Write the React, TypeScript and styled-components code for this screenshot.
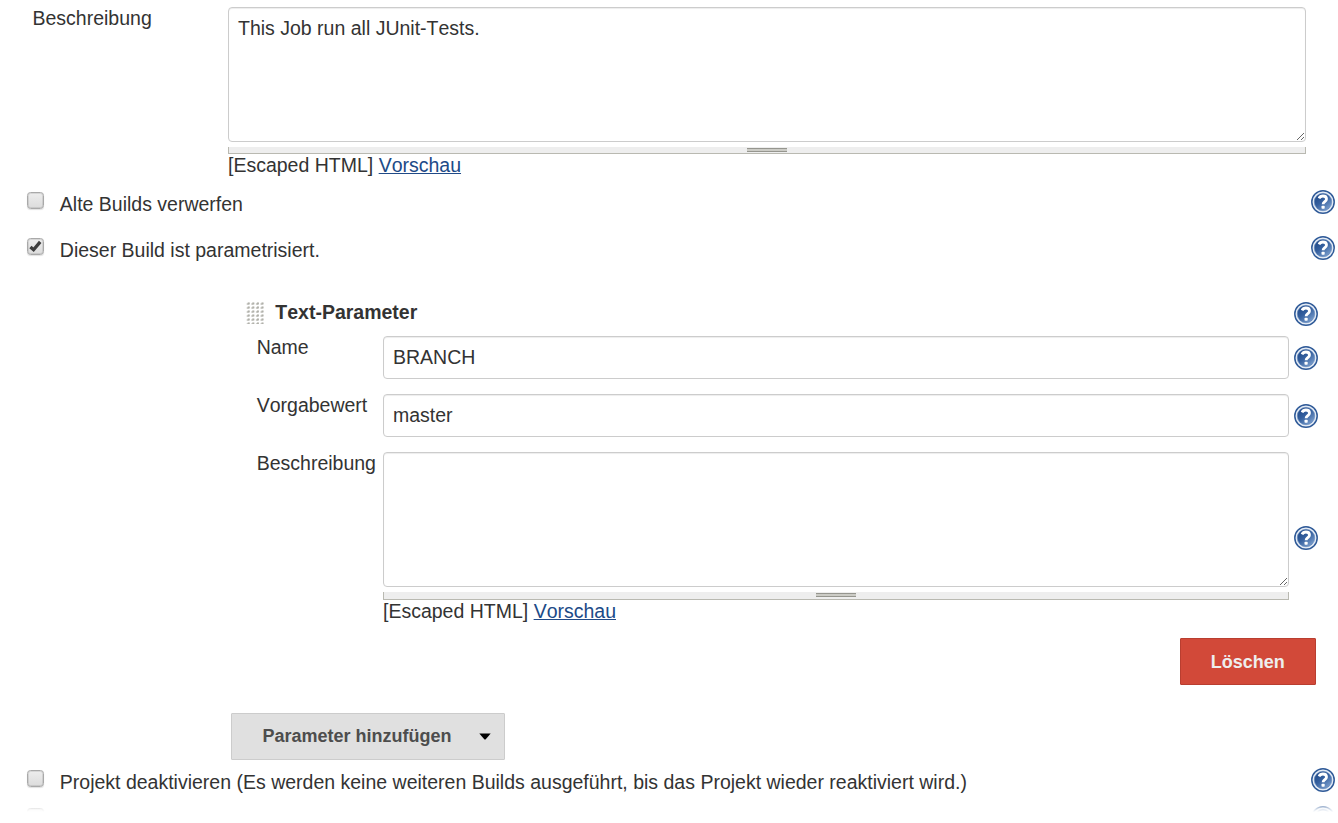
import React from 'react';
import styled, { createGlobalStyle } from 'styled-components';

const GlobalStyle = createGlobalStyle`
  *, *::before, *::after { box-sizing: border-box; }
  html, body { margin: 0; padding: 0; background: #fff; }
  body {
    font-family: "Liberation Sans", Arial, Helvetica, sans-serif;
    font-size: 19.5px;
    line-height: 22px;
    font-kerning: none;
    color: #333;
  }
`;

const Page = styled.main`
  position: relative;
  height: 823px;
  overflow: hidden;
  padding-top: 7px;
`;

const DescriptionRow = styled.section`
  display: grid;
  grid-template-columns: 195.5px 1078px;
  padding: 0 0 14px 32.5px;
`;

const Field = styled.div<{ $multiline?: boolean }>`
  height: ${p => (p.$multiline ? 135 : 43)}px;
  padding: 9px;
  border: 1px solid #ccc;
  border-radius: 4px;
  background: #fff;
  box-shadow: inset 0 1px 1px rgba(0, 0, 0, 0.075);
  overflow: hidden;
  resize: ${p => (p.$multiline ? 'vertical' : 'none')};
`;

const ResizeBar = styled.div<{ $tall?: boolean }>`
  height: ${p => (p.$tall ? 8 : 7)}px;
  margin-top: 5px;
  display: flex;
  justify-content: center;
  padding-top: 1px;
  border: 1px solid #b9b9b1;
  border-top: 0;
  background: #eee;
`;

const ResizeHandle = styled.span`
  width: 40px;
  height: 4px;
  border: solid #96968f;
  border-width: 1px 0;
  background: #ccccc6;
`;

const Link = styled.a`
  color: #204a87;
  text-decoration: underline;
`;

const OptionRow = styled.div<{ $height: number }>`
  display: flex;
  align-items: flex-start;
  height: ${p => p.$height}px;
  padding: 0 3px 0 27px;
`;

const OptionText = styled.label`
  flex: 1;
  padding: 3px 0 0 15.8px;
  font-kerning: auto;
`;

const Checkbox = styled.span`
  display: flex;
  align-items: center;
  justify-content: center;
  width: 17px;
  height: 17px;
  margin-top: 2px;
  border: 1px solid #a9a9a9;
  border-radius: 3.5px;
  background: linear-gradient(#ededed, #dcdcdc);
  box-shadow: inset 0 0 0 1px rgba(0, 0, 0, 0.09), 0 1px 1px rgba(0, 0, 0, 0.12);
`;

const ParameterPanel = styled.section`
  display: flex;
  flex-direction: column;
  width: 1090px;
  margin: 20px 0 8px 228px;
`;

const ParameterHead = styled.header`
  display: flex;
  align-items: flex-start;
  height: 34px;
  padding-left: 18px;
`;

const Title = styled.h3`
  flex: 1;
  margin: -1px 0 0 11.3px;
  font-size: inherit;
  line-height: 22px;
  font-weight: bold;
`;

const ParameterRow = styled.div<{ $height: number }>`
  display: grid;
  grid-template-columns: 126.3px 906px 24px;
  height: ${p => p.$height}px;
  padding-left: 28.7px;
`;

const HelpCell = styled.span<{ $top: number }>`
  padding-top: ${p => p.$top}px;
  margin-left: 5px;
`;

const Actions = styled.div<{ $end?: boolean }>`
  display: flex;
  justify-content: ${p => (p.$end ? 'flex-end' : 'flex-start')};
  padding: ${p => (p.$end ? '0 2px 0 0' : '28px 0 0 3px')};
`;

const Button = styled.button<{ $danger?: boolean }>`
  display: flex;
  align-items: center;
  width: ${p => (p.$danger ? 136 : 274)}px;
  height: 47px;
  padding: ${p => (p.$danger ? '0 12px 0 29.7px' : '0 13px 2px 30.5px')};
  justify-content: space-between;
  border: 1px solid ${p => (p.$danger ? '#b93e30' : '#ccc')};
  border-radius: 1px;
  background: ${p => (p.$danger ? '#d24939' : '#e0e0e0')};
  color: ${p => (p.$danger ? '#eee' : '#4d4d4d')};
  font: bold 18px/22px "Liberation Sans", Arial, sans-serif;
  font-kerning: none;
  white-space: nowrap;
`;

const BottomFade = styled.div`
  position: absolute;
  inset: 794px 0 0;
  background: linear-gradient(rgba(255, 255, 255, 0) 0, rgba(255, 255, 255, 0.5) 12px, rgba(255, 255, 255, 0.8) 15px, #fff 18px);
`;

const Icon = styled.svg`
  display: block;
  flex: none;
`;

const Caret = styled(Icon)`
  margin-top: 2px;
`;

const HelpIcon = () => (
  <Icon width="24" height="24" viewBox="0 0 24 24" fill="none">
    <defs>
      <linearGradient id="helpFill" x1="0.1" y1="0" x2="0.9" y2="1">
        <stop offset="0" stopColor="#1c4585" />
        <stop offset="0.45" stopColor="#35609f" />
        <stop offset="1" stopColor="#86a8d4" />
      </linearGradient>
    </defs>
    <circle cx="12" cy="12" r="11.2" fill="#e6edf6" stroke="#2f5a98" strokeWidth="1.5" />
    <circle cx="12" cy="12" r="8.7" fill="url(#helpFill)" stroke="#5f85b8" strokeWidth="0.6" />
    <path d="M8 8.3C8.8 6.7 10.2 6 11.9 6c2.2 0 3.6 1.1 3.6 2.9 0 2.7-3.4 2.6-3.4 5.3" stroke="#fff" strokeWidth="2.8" />
    <rect x="10.5" y="15.7" width="3.2" height="3" rx="0.7" fill="#fff" />
  </Icon>
);

const CheckIcon = () => (
  <Icon width="15" height="15" viewBox="0 0 15 15">
    <path d="M2.4 7.9 5.6 10.7 12.2 2.9" fill="none" stroke="#3d3d3d" strokeWidth="3.3" />
  </Icon>
);

const DragHandle = () => (
  <Icon width="18" height="22" viewBox="0 0 18 22">
    {[0, 1, 2, 3, 4, 5].flatMap(row =>
      [0, 1, 2, 3].map(col => (
        <g key={`${row}-${col}`} transform={`translate(${0.7 + col * 4.6} ${row * 4})`}>
          <path d="M0 1h1V0h2v1.5H2V3H0z" fill="#d2d2cd" />
          <rect x="1" y="1" width="2" height="1.5" fill="#b0b0aa" />
        </g>
      )),
    )}
  </Icon>
);

const CaretIcon = () => (
  <Caret width="12" height="7" viewBox="0 0 12 7">
    <path d="M0.3 0.5h11.4L6.5 6.5h-1z" fill="#000" />
  </Caret>
);

const TextArea = ({ children, tallBar }: { children?: React.ReactNode; tallBar?: boolean }) => (
  <div>
    <Field $multiline>{children}</Field>
    <ResizeBar $tall={tallBar}>
      <ResizeHandle />
    </ResizeBar>
    <div>
      [Escaped HTML] <Link>Vorschau</Link>
    </div>
  </div>
);

const Option = ({ label, checked, height }: { label?: string; checked?: boolean; height: number }) => (
  <OptionRow $height={height}>
    <Checkbox>{checked && <CheckIcon />}</Checkbox>
    <OptionText>{label}</OptionText>
    <HelpIcon />
  </OptionRow>
);

export default function App() {
  return (
    <>
      <GlobalStyle />
      <Page>
        <DescriptionRow>
          <span>Beschreibung</span>
          <TextArea>This Job run all JUnit-Tests.</TextArea>
        </DescriptionRow>
        <Option label="Alte Builds verwerfen" height={46} />
        <Option label="Dieser Build ist parametrisiert." checked height={46} />
        <ParameterPanel>
          <ParameterHead>
            <DragHandle />
            <Title>Text-Parameter</Title>
            <HelpIcon />
          </ParameterHead>
          <ParameterRow $height={58}>
            <span>Name</span>
            <Field>BRANCH</Field>
            <HelpCell $top={10}><HelpIcon /></HelpCell>
          </ParameterRow>
          <ParameterRow $height={58}>
            <span>Vorgabewert</span>
            <Field>master</Field>
            <HelpCell $top={10}><HelpIcon /></HelpCell>
          </ParameterRow>
          <ParameterRow $height={186}>
            <span>Beschreibung</span>
            <TextArea tallBar />
            <HelpCell $top={74}><HelpIcon /></HelpCell>
          </ParameterRow>
          <Actions $end>
            <Button $danger>Löschen</Button>
          </Actions>
          <Actions>
            <Button>
              Parameter hinzufügen
              <CaretIcon />
            </Button>
          </Actions>
        </ParameterPanel>
        <Option
          label="Projekt deaktivieren (Es werden keine weiteren Builds ausgeführt, bis das Projekt wieder reaktiviert wird.)"
          height={38}
        />
        <Option height={24} />
        <BottomFade />
      </Page>
    </>
  );
}
